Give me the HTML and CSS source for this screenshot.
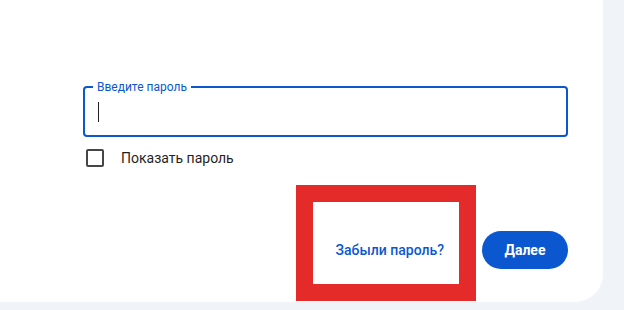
FILE: index.html
```html
<!DOCTYPE html>
<html lang="ru">
  <head>
    <meta charset="UTF-8" />
    <title>Введите пароль</title>
    <link rel="stylesheet" href="styles.css">
  </head>
  <body>
    <div class="card">
      <div class="field">
        <span class="field__label">Введите пароль</span>
        <span class="field__caret"></span>
      </div>

      <label class="show">
        <span class="show__box"></span>
        <span class="show__text">Показать пароль</span>
      </label>

      <div class="actions">
        <a class="forgot" href="#">Забыли пароль?</a>
        <button class="next">Далее</button>
        <div class="mark"></div>
      </div>
    </div>
  </body>
</html>
```

FILE: styles.css
```css
body {
  margin: 0;
  background-color: #f0f4f9;
  font-family: Roboto, "Liberation Sans", sans-serif;
  width: 624px;
  height: 310px;
  overflow: hidden;
}

.card {
  background-color: white;
  width: 520px;
  height: 216px;
  padding: 86px 0 0 83px;
  border-bottom-right-radius: 28px;
  display: flex;
  flex-direction: column;
}

.field {
  position: relative;
  width: 481px;
  height: 47px;
  border: 2px solid #0b57d0;
  border-radius: 4px;
  display: flex;
  align-items: center;
}

.field__label {
  position: absolute;
  top: -9px;
  left: 8px;
  padding: 0 4px;
  background-color: white;
  color: #0b57d0;
  font-size: 12px;
  line-height: 16px;
}

.field__caret {
  display: block;
  width: 1px;
  height: 20px;
  margin-left: 13px;
  background-color: #1f1f1f;
}

.show {
  display: flex;
  align-items: center;
  margin-top: 12px;
  margin-left: 3px;
}

.show__box {
  width: 14px;
  height: 14px;
  border: 2px solid #444746;
  border-radius: 2px;
}

.show__text {
  margin-left: 17px;
  font-size: 14px;
  color: #1f1f1f;
}

.actions {
  position: relative;
  display: flex;
  align-items: center;
  justify-content: flex-end;
  width: 485px;
  margin-top: 64px;
}

.forgot {
  color: #0b57d0;
  font-size: 14px;
  font-weight: 500;
  text-decoration: none;
  margin-right: 38px;
}

.next {
  width: 86px;
  height: 38px;
  border: none;
  border-radius: 19px;
  background-color: #0b57d0;
  color: white;
  font-family: inherit;
  font-size: 14px;
  font-weight: 700;
}

.mark {
  position: absolute;
  left: 213px;
  top: -46px;
  width: 146px;
  height: 82px;
  border: 17px solid #e52a2a;
}
```
